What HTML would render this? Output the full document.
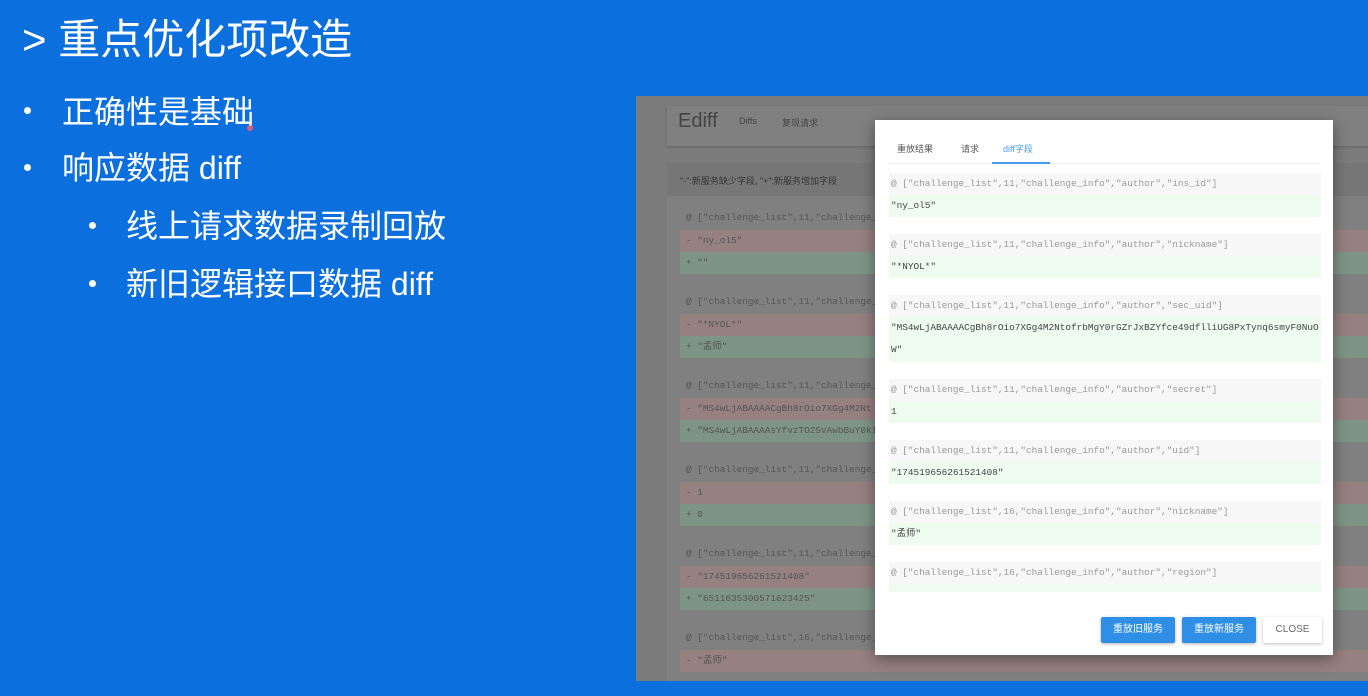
<!DOCTYPE html>
<html><head><meta charset="utf-8"><style>
*{margin:0;padding:0;box-sizing:border-box}
body{width:1368px;height:696px;overflow:hidden;background:#0b6fde;font-family:"Liberation Sans","Noto Sans CJK SC",sans-serif;position:relative;color:#fff}
.t{position:absolute;white-space:nowrap}
.dot{position:absolute;width:7px;height:7px;border-radius:50%;background:#fff}
#shot{position:absolute;left:636px;top:96px;width:732px;height:585px;background:#7b7b7b;overflow:hidden}
.mono{font-family:"Liberation Mono","Noto Sans CJK SC",monospace;font-size:9.4px;white-space:nowrap;overflow:hidden}
.lrow{position:absolute;left:44px;width:700px;height:22px;line-height:22px;padding-left:6px;color:#555}
#modal{position:absolute;left:875px;top:120px;width:458px;height:535px;background:#fff;box-shadow:0 4px 14px rgba(0,0,0,.4)}
.mh{position:absolute;left:14px;width:432px;height:22px;line-height:22px;background:#f7f7f7;color:#999;padding-left:2px}
.mv{position:absolute;left:14px;width:432px;line-height:22px;background:#eefbef;color:#444;padding-left:2px;padding-right:2px}
.wrap{white-space:normal;word-break:break-all}
.btn{position:absolute;top:497px;height:26px;line-height:26px;text-align:center;font-size:10px;border-radius:2px}
</style></head><body>
<div class="t" style="left:22px;top:14px;font-size:42px;line-height:52px">&gt; 重点优化项改造</div>
<div style="position:absolute;left:247px;top:125px;width:6px;height:6px;border-radius:50%;background:#e05a7a"></div>
<div class="dot" style="left:24px;top:107px"></div>
<div class="t" style="left:62px;top:91px;font-size:32px;line-height:42px">正确性是基础</div>
<div class="dot" style="left:24px;top:164px"></div>
<div class="t" style="left:62px;top:147px;font-size:32px;line-height:42px">响应数据 diff</div>
<div class="dot" style="left:89px;top:222px"></div>
<div class="t" style="left:126px;top:205px;font-size:32px;line-height:42px">线上请求数据录制回放</div>
<div class="dot" style="left:89px;top:280px"></div>
<div class="t" style="left:126px;top:263px;font-size:32px;line-height:42px">新旧逻辑接口数据 diff</div>

<div id="shot">
 <div style="position:absolute;left:31px;top:10px;width:720px;height:40px;background:#808080;box-shadow:0 1px 3px rgba(0,0,0,.2)"></div>
 <div class="t" style="left:42px;top:14px;font-size:20px;color:#444">Ediff</div>
 <div class="t" style="left:103px;top:20px;font-size:9px;color:#444">Diffs</div>
 <div class="t" style="left:146px;top:20px;font-size:9px;color:#444">复现请求</div>
 <div style="position:absolute;left:31px;top:67px;width:720px;height:520px;background:#808080"></div>
 <div style="position:absolute;left:31px;top:67px;width:720px;height:33px;background:#777"></div>
 <div class="t" style="left:44px;top:78px;font-size:9px;color:#333">"-":新服务缺少字段, "+":新服务增加字段</div>
 <div class="lrow mono" style="top:111px">@ ["challenge_list",11,"challenge_</div>
 <div class="lrow mono" style="top:134px;background:#968080">- "ny_ol5"</div>
 <div class="lrow mono" style="top:156px;background:#7e9486">+ ""</div>
 <div class="lrow mono" style="top:195px">@ ["challenge_list",11,"challenge_</div>
 <div class="lrow mono" style="top:218px;background:#968080">- "*NYOL*"</div>
 <div class="lrow mono" style="top:240px;background:#7e9486">+ "孟师"</div>
 <div class="lrow mono" style="top:279px">@ ["challenge_list",11,"challenge_</div>
 <div class="lrow mono" style="top:302px;background:#968080">- "MS4wLjABAAAACgBh8rOio7XGg4M2Nt</div>
 <div class="lrow mono" style="top:324px;background:#7e9486">+ "MS4wLjABAAAAsYfvzTO25vAwbBuY0kI</div>
 <div class="lrow mono" style="top:363px">@ ["challenge_list",11,"challenge_</div>
 <div class="lrow mono" style="top:386px;background:#968080">- 1</div>
 <div class="lrow mono" style="top:408px;background:#7e9486">+ 0</div>
 <div class="lrow mono" style="top:447px">@ ["challenge_list",11,"challenge_</div>
 <div class="lrow mono" style="top:470px;background:#968080">- "174519656261521408"</div>
 <div class="lrow mono" style="top:492px;background:#7e9486">+ "6511635300571623425"</div>
 <div class="lrow mono" style="top:531px">@ ["challenge_list",16,"challenge_</div>
 <div class="lrow mono" style="top:554px;background:#968080">- "孟师"</div>
</div>
<div style="position:absolute;left:0;top:681px;width:1368px;height:15px;background:#0b6fde"></div>

<div id="modal">
 <div class="t" style="left:22px;top:22px;font-size:9px;color:#555">重放结果</div>
 <div class="t" style="left:86px;top:22px;font-size:9px;color:#555">请求</div>
 <div class="t" style="left:128px;top:22px;font-size:9px;color:#4a9be8">diff字段</div>
 <div style="position:absolute;left:14px;top:43px;width:432px;height:1px;background:#eee"></div>
 <div style="position:absolute;left:117px;top:42px;width:58px;height:2px;background:#4a9be8"></div>
 <div class="mh mono" style="top:53px">@ ["challenge_list",11,"challenge_info","author","ins_id"]</div>
 <div class="mv mono" style="top:75px;height:22px">"ny_ol5"</div>
 <div class="mh mono" style="top:114px">@ ["challenge_list",11,"challenge_info","author","nickname"]</div>
 <div class="mv mono" style="top:136px;height:22px">"*NYOL*"</div>
 <div class="mh mono" style="top:175px">@ ["challenge_list",11,"challenge_info","author","sec_uid"]</div>
 <div class="mv mono wrap" style="top:197px;height:45px">"MS4wLjABAAAACgBh8rOio7XGg4M2NtofrbMgY0rGZrJxBZYfce49dflliUG8PxTynq6smyF0NuOW"</div>
 <div class="mh mono" style="top:259px">@ ["challenge_list",11,"challenge_info","author","secret"]</div>
 <div class="mv mono" style="top:281px;height:22px">1</div>
 <div class="mh mono" style="top:320px">@ ["challenge_list",11,"challenge_info","author","uid"]</div>
 <div class="mv mono" style="top:342px;height:22px">"174519656261521408"</div>
 <div class="mh mono" style="top:381px">@ ["challenge_list",16,"challenge_info","author","nickname"]</div>
 <div class="mv mono" style="top:403px;height:22px">"孟师"</div>
 <div class="mh mono" style="top:442px">@ ["challenge_list",16,"challenge_info","author","region"]</div>
 <div class="mv mono" style="top:464px;height:8px"></div>
 <div class="btn" style="left:226px;width:74px;background:#2f8fe6;color:#fff;box-shadow:0 1px 3px rgba(0,0,0,.3)">重放旧服务</div>
 <div class="btn" style="left:307px;width:74px;background:#2f8fe6;color:#fff;box-shadow:0 1px 3px rgba(0,0,0,.3)">重放新服务</div>
 <div class="btn" style="left:388px;width:59px;background:#fff;color:#666;box-shadow:0 1px 3px rgba(0,0,0,.25)">CLOSE</div>
</div>
</body></html>
